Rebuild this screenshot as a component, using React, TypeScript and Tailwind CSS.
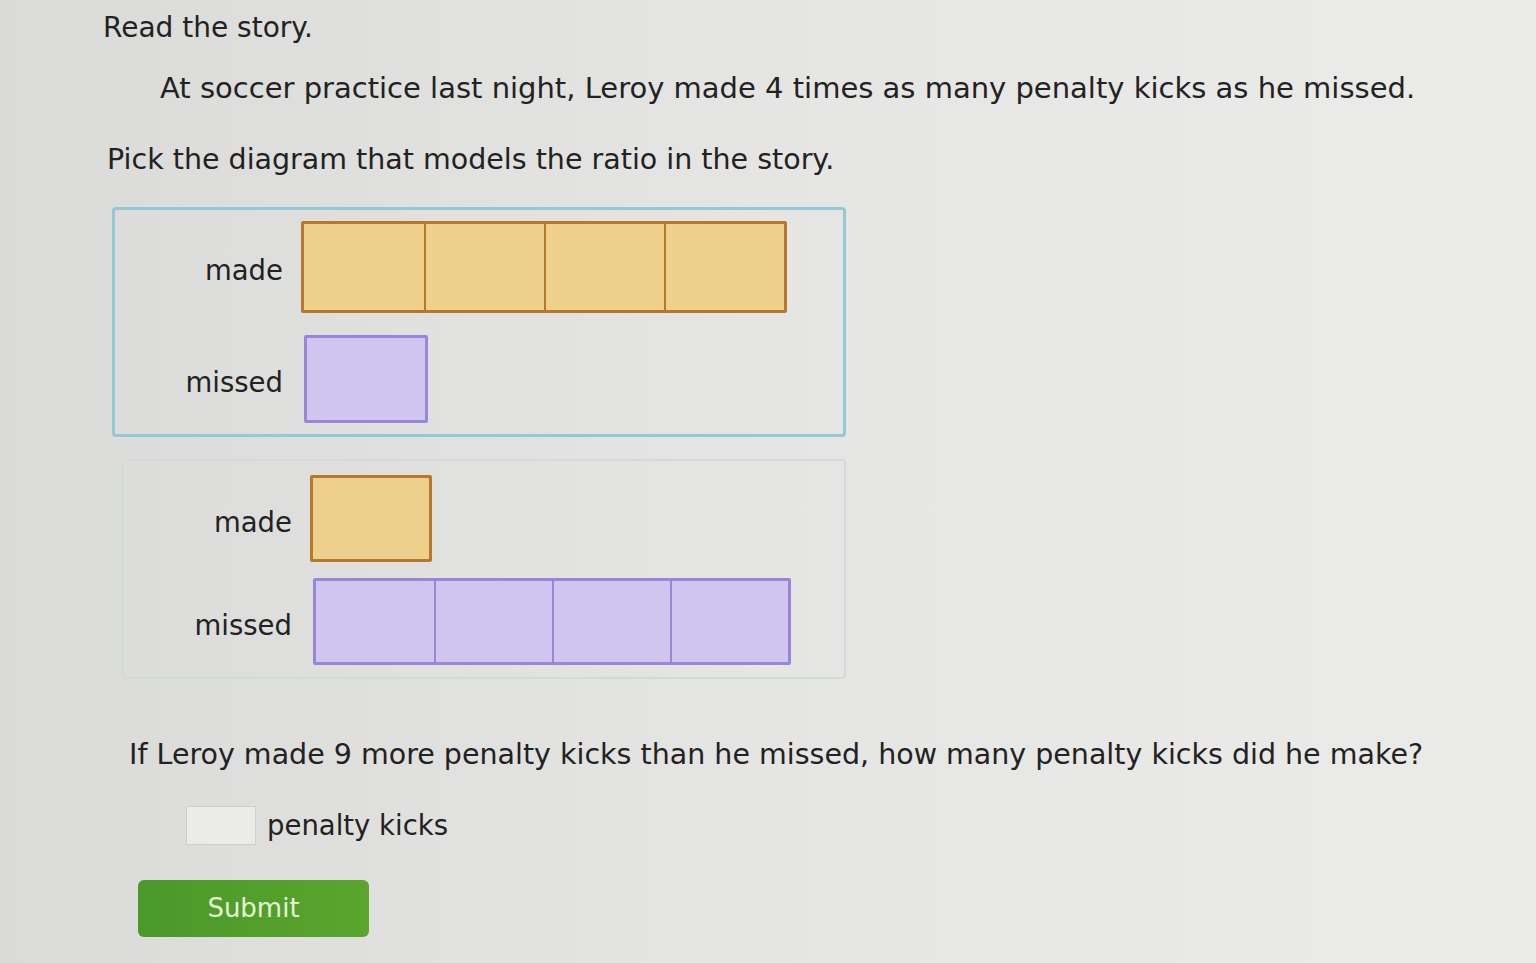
import React from "react";

const font = { fontFamily: '"DejaVu Sans", Verdana, sans-serif' };

function Cells({ count, fill, line, cellW, cellH }: { count: number; fill: string; line: string; cellW: string; cellH: string }) {
  return (
    <div className={`flex border-[3px] ${line} ${fill} rounded-[2px]`}>
      {Array.from({ length: count }).map((_, i) => (
        <div
          key={i}
          className={`${cellW} ${cellH} ${i > 0 ? `border-l-[2px] ${line}` : ""}`}
        />
      ))}
    </div>
  );
}

function Row({ label, children, className }: { label: string; children: React.ReactNode; className?: string }) {
  return (
    <div className={`flex items-center ${className ?? ""}`}>
      <div className="w-[170px] shrink-0 pr-[2px] pt-[8px] text-right text-[27.5px]">{label}</div>
      <div className="ml-[16px]">{children}</div>
    </div>
  );
}

export default function App() {
  return (
    <div
      style={font}
      className="w-full h-[963px] overflow-hidden bg-gradient-to-r from-[#dadad8] via-[#e5e5e3] to-[#ebebe9] text-[#222222]"
    >
      <p className="pl-[103px] pt-[8px] text-[28px] leading-[40px]">Read the story.</p>

      <p className="pl-[160px] mt-[20px] text-[29px] leading-[40px]">
        At soccer practice last night, Leroy made 4 times as many penalty kicks as he missed.
      </p>

      <p className="pl-[107px] mt-[32px] text-[28.5px] leading-[40px]">
        Pick the diagram that models the ratio in the story.
      </p>

      <div className="ml-[112px] mt-[27px] w-[734px] h-[230px] border-[3px] border-[#93c9d6] rounded-[4px] pt-[11px]">
        <Row label="made">
          <Cells count={4} fill="bg-[#ecd08c]" line="border-[#b8772c]" cellW="w-[120px]" cellH="h-[86px]" />
        </Row>
        <Row label="missed" className="mt-[22px]">
          <div className="ml-[3px]">
            <Cells count={1} fill="bg-[#d0c5ef]" line="border-[#9a86d8]" cellW="w-[118px]" cellH="h-[82px]" />
          </div>
        </Row>
      </div>

      <div className="ml-[122px] mt-[22px] w-[724px] h-[220px] border-[2px] border-[#d4dadc] rounded-[4px] pt-[14px]">
        <Row label="made">
          <Cells count={1} fill="bg-[#ecd08c]" line="border-[#b8772c]" cellW="w-[116px]" cellH="h-[81px]" />
        </Row>
        <Row label="missed" className="mt-[16px]">
          <div className="ml-[3px]">
            <Cells count={4} fill="bg-[#d0c5ef]" line="border-[#9a86d8]" cellW="w-[118px]" cellH="h-[81px]" />
          </div>
        </Row>
      </div>

      <p className="pl-[129px] mt-[56px] text-[28.5px] leading-[40px]">
        If Leroy made 9 more penalty kicks than he missed, how many penalty kicks did he make?
      </p>

      <div className="flex items-center pl-[186px] mt-[30px]">
        <input
          type="text"
          className="w-[70px] h-[39px] bg-[#ebebe9] border border-[#cfcfcf] outline-none"
        />
        <span className="ml-[11px] text-[27.5px]">penalty kicks</span>
      </div>

      <button className="ml-[138px] mt-[34px] w-[231px] h-[57px] rounded-[6px] bg-gradient-to-r from-[#4a982a] to-[#5aa52c] text-[#e2f4d4] text-[26px]">
        Submit
      </button>
    </div>
  );
}
